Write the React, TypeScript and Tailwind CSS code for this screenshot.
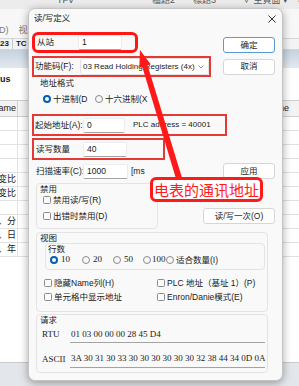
import React from "react";

function Radio({ on }: { on?: boolean }) {
  return on ? (
    <span className="w-[8px] h-[8px] rounded-full border-[2.5px] border-[#005fb8] bg-white shrink-0" />
  ) : (
    <span className="w-[8px] h-[8px] rounded-full border border-[#8b8b8b] bg-[#f7f7f7] shrink-0" />
  );
}

function Check() {
  return <span className="w-[8px] h-[8px] rounded-[1.5px] border border-[#8b8b8b] bg-[#fbfbfb] shrink-0" />;
}

function Btn({ children, className = "" }: { children: React.ReactNode; className?: string }) {
  return (
    <div className={"h-[16px] bg-white border rounded-[3px] flex items-center justify-center text-[8.5px] text-[#1a1a1a] " + className}>
      {children}
    </div>
  );
}

function Input({ children, className = "" }: { children: React.ReactNode; className?: string }) {
  return (
    <div className={"h-[15px] bg-white border border-[#ececec] border-b-[#a3a3a3] rounded-[2px] flex items-center pl-[3px] text-[8.5px] shrink-0 " + className}>
      {children}
    </div>
  );
}

const rows = ["", "", "", "", "电压变比", "电流变比", "", "秒、分", "时、日", "月、年"];

export default function App() {
  return (
    <div className="w-[299px] h-[386px] relative overflow-hidden bg-white text-[#1a1a1a] whitespace-nowrap font-['Liberation_Sans','Noto_Sans_CJK_SC',sans-serif]">
      {/* application behind the dialog */}
      <div className="flex flex-col h-full">
        <div className="h-[9px] bg-[#ececec] overflow-hidden flex text-[9px] text-[#555] leading-[10px]">
          <span className="ml-[57px] -mt-[5px]">TFV</span>
          <span className="ml-[78px] -mt-[5px]">檔題2</span>
          <span className="ml-[18px] -mt-[5px]">標題3</span>
          <span className="ml-[26px] -mt-[5px]">∨ 主頁面 ▾</span>
          <span className="ml-[10px] -mt-[5px]">標題</span>
        </div>
        <div className="h-[15px] bg-[#f7f7f7]" />
        <div className="h-[14px] bg-[#f7f7f7] flex items-center text-[9px] text-[#7a7a7a]">
          <span className="-ml-[1px]">D)</span>
          <span className="ml-[10px]">视图</span>
        </div>
        <div className="h-[12px] bg-[#f3f3f3] border-y border-[#d6d6d6] flex items-center text-[8px] font-bold">
          <span>23</span>
          <span className="w-px h-[10px] bg-[#c8c8c8] ml-[3px]" />
          <span className="ml-[3px]">TC</span>
          <span className="w-px h-[10px] bg-[#c8c8c8] ml-[3px]" />
        </div>
        <div className="h-[18px] bg-gradient-to-b from-[#c5d2df] to-[#e2e9f0]" />
        <div className="h-[24px] flex items-center text-[9px] font-bold">us</div>
        <div className="h-[8px]" />
        <div className="h-[17px] flex bg-[#f3f3f3] border-y border-[#cfcfcf] text-[9px]">
          <div className="w-[18px] border-r border-[#cfcfcf] flex items-center justify-end overflow-hidden pr-[1px]">
            <span>Name</span>
          </div>
          <div className="flex-1" />
          <div className="w-[26px] border-l border-[#cfcfcf] flex items-center pl-[1px] overflow-hidden">
            <span className="-ml-[10px]">Name</span>
          </div>
        </div>
        {rows.map((r, i) => (
          <div key={i} className="h-[14px] flex border-b border-[#e2e2e2] text-[9px]">
            <div className="w-[18px] border-r border-[#e2e2e2] flex items-center justify-end overflow-hidden pr-[1px]">
              <span>{r}</span>
            </div>
            <div className="flex-1" />
            <div className="w-[26px] border-l border-[#e2e2e2]" />
          </div>
        ))}
        <div className="flex-1" />
        <div className="h-[24px] bg-[#e3e6ea] border-t border-[#c9c9c9]" />
      </div>

      {/* dialog */}
      <div className="absolute left-[28px] top-[8px] w-[255px] h-[373px] bg-[#f9f9f9] rounded-[7px] border border-[#c4c4c4] shadow-[0_2px_8px_rgba(0,0,0,0.35)] flex flex-col text-[8.5px]">
        <div className="h-[19px] flex items-center justify-between pl-[5px] pr-[6px]">
          <span>读/写定义</span>
          <svg width="8" height="8" viewBox="0 0 8 8">
            <path d="M0.5 0.5 L7.5 7.5 M7.5 0.5 L0.5 7.5" stroke="#333" strokeWidth="1" />
          </svg>
        </div>
        <div className="flex flex-col pl-[3px] pr-[7px]">
          <div className="flex items-end justify-between h-[21px] mt-[4px]">
            <div className="w-[106px] h-[21px] border-[3px] border-[#ff1717] rounded-[6px] flex items-center pl-[2px]">
              <span className="w-[41px] shrink-0">从站</span>
              <Input className="w-[44px]">1</Input>
            </div>
            <Btn className="w-[52px] border-[#5b9bd5]">确定</Btn>
          </div>

          <div className="flex items-center justify-between h-[21px] mt-[3px]">
            <div className="w-[179px] h-[21px] border-2 border-[#e53935] flex items-center pl-[1px]">
              <span className="w-[45px] shrink-0">功能码(F):</span>
              <div className="flex-1 h-[17px] bg-white border border-[#e2e2e2] rounded-[3px] flex items-center justify-between pl-[2px] pr-[4px] text-[8px]">
                <span>03 Read Holding Registers (4x)</span>
                <svg width="6" height="4" viewBox="0 0 6 4">
                  <path d="M0.5 0.5 L3 3 L5.5 0.5" stroke="#777" strokeWidth="0.8" fill="none" />
                </svg>
              </div>
            </div>
            <Btn className="w-[52px] border-[#d6d6d6]">取消</Btn>
          </div>

          <div className="h-[12px] flex items-center ml-[8px]">地址格式</div>
          <div className="h-[12px] mt-[4px] flex items-center ml-[11px]">
            <div className="w-[52px] flex items-center gap-[2px]">
              <Radio on />
              <span>十进制(D</span>
            </div>
            <div className="flex items-center gap-[2px]">
              <Radio />
              <span>十六进制(X</span>
            </div>
          </div>

          <div className="w-[195px] h-[22px] mt-[9px] border-2 border-[#e53935] flex items-center pl-[1px]">
            <span className="w-[48px] shrink-0">起始地址(A):</span>
            <Input className="w-[42px]">0</Input>
            <span className="ml-[8px] text-[8px]">PLC address = 40001</span>
          </div>

          <div className="w-[133px] h-[22px] mt-[2px] border-2 border-[#e53935] flex items-center pl-[2px]">
            <span className="w-[47px] shrink-0">读写数量</span>
            <Input className="w-[44px]">40</Input>
          </div>

          <div className="h-[16px] mt-[3px] flex items-center justify-between">
            <div className="flex items-center pl-[4px]">
              <span className="w-[47px] shrink-0">扫描速率(C):</span>
              <Input className="w-[45px]">1000</Input>
              <span className="ml-[3px]">[ms</span>
            </div>
            <Btn className="w-[52px] border-[#d6d6d6]">应用</Btn>
          </div>

          <div className="mt-[4px] flex items-end justify-between">
            <div className="ml-[4px] w-[122px] h-[46px] border border-[#e4e4e4] rounded-[4px] flex flex-col pl-[3px]">
              <div className="h-[10px] flex items-center">禁用</div>
              <div className="h-[12px] flex items-center gap-[2px] pl-[3px]">
                <Check />
                <span>禁用读/写(R)</span>
              </div>
              <div className="h-[12px] mt-[4px] flex items-center gap-[2px] pl-[3px]">
                <Check />
                <span>出错时禁用(D)</span>
              </div>
            </div>
            <Btn className="w-[72px] mb-[5px] border-[#d6d6d6]">读/写一次(O)</Btn>
          </div>

          <div className="mt-[3px] ml-[4px] w-[232px] h-[80px] border border-[#e4e4e4] rounded-[4px] flex flex-col">
            <div className="h-[10px] flex items-center pl-[3px]">视图</div>
            <div className="ml-[8px] w-[220px] border border-[#e4e4e4] rounded-[4px] flex flex-col pb-[3px]">
              <div className="h-[10px] flex items-center pl-[2px]">行数</div>
              <div className="h-[12px] flex items-center pl-[4px] text-[9px] font-['Liberation_Serif','Noto_Sans_CJK_SC',serif]">
                <div className="w-[32px] flex items-center gap-[3px]">
                  <Radio on />
                  <span>10</span>
                </div>
                <div className="w-[31px] flex items-center gap-[3px]">
                  <Radio />
                  <span>20</span>
                </div>
                <div className="w-[30px] flex items-center gap-[3px]">
                  <Radio />
                  <span>50</span>
                </div>
                <div className="w-[23px] flex items-center gap-[1px]">
                  <Radio />
                  <span>100</span>
                </div>
                <div className="flex items-center gap-[2px] font-['Liberation_Sans','Noto_Sans_CJK_SC',sans-serif] text-[8.5px]">
                  <Radio />
                  <span>适合数量(I)</span>
                </div>
              </div>
            </div>
            <div className="h-[12px] mt-[7px] flex items-center pl-[7px]">
              <div className="w-[113px] flex items-center gap-[2px]">
                <Check />
                <span>隐藏Name列(H)</span>
              </div>
              <div className="flex items-center gap-[2px]">
                <Check />
                <span>PLC 地址（基址 1）(P)</span>
              </div>
            </div>
            <div className="h-[12px] mt-[2px] flex items-center pl-[7px]">
              <div className="w-[113px] flex items-center gap-[2px]">
                <Check />
                <span>单元格中显示地址</span>
              </div>
              <div className="flex items-center gap-[2px]">
                <Check />
                <span>Enron/Danie模式(E)</span>
              </div>
            </div>
          </div>

          <div className="mt-[2px] ml-[4px] w-[232px] h-[59px] border border-[#e4e4e4] rounded-[4px] flex flex-col pr-[2px] font-['Liberation_Serif','Noto_Sans_CJK_SC',serif] text-[9px]">
            <div className="h-[10px] flex items-center pl-[3px] font-['Liberation_Sans','Noto_Sans_CJK_SC',sans-serif] text-[8.5px]">请求</div>
            <div className="h-[16px] mt-[2px] flex items-center pl-[5px]">
              <span className="w-[28px] shrink-0">RTU</span>
              <div className="flex-1 h-full border-b border-[#a3a3a3] flex items-center pl-[1px]">01 03 00 00 00 28 45 D4</div>
            </div>
            <div className="h-[17px] mt-[8px] flex items-center pl-[5px]">
              <span className="w-[28px] shrink-0">ASCII</span>
              <div className="flex-1 h-full border-b border-[#a3a3a3] flex items-center pl-[1px] overflow-hidden">
                3A 30 31 30 33 30 30 30 30 30 30 32 38 44 34 0D 0A
              </div>
            </div>
          </div>
        </div>
      </div>

      {/* red annotation */}
      <svg className="absolute left-0 top-0" width="299" height="386" viewBox="0 0 299 386">
        <polygon points="142,66 147.5,65 183,181 177,182" fill="#ff1a1a" />
        <polygon points="140,50 150.7,64.2 139.3,67.8" fill="#ff1a1a" />
      </svg>
      <div className="absolute left-[150px] top-[177px] w-[113px] h-[25px] border-[3px] border-[#ff1a1a] rounded-[6px] bg-white flex items-center justify-center text-[15px] leading-none text-[#ff1a1a] font-['Noto_Sans_CJK_SC',sans-serif]">
        电表的通讯地址
      </div>
    </div>
  );
}
